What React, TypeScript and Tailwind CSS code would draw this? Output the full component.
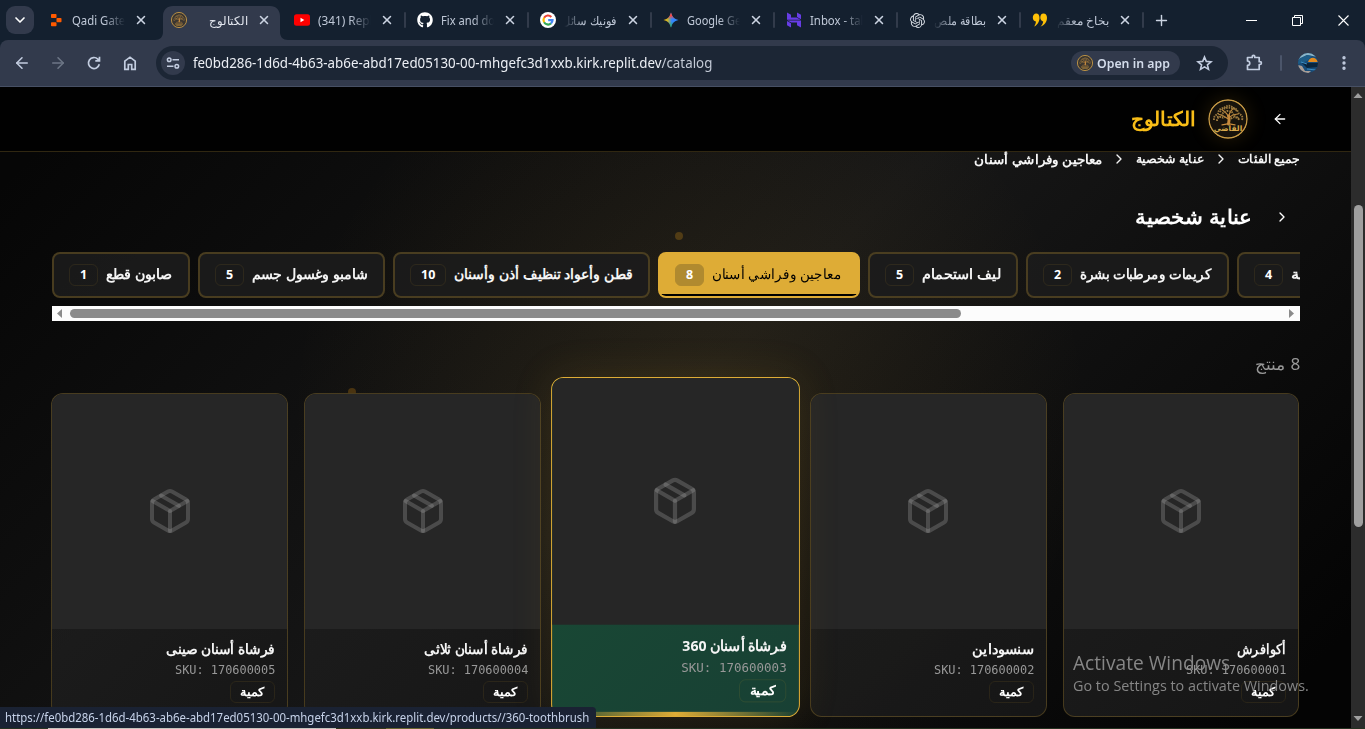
import { useLayoutEffect, useRef, useState, type ReactNode } from 'react';
import { ArrowLeft, ArrowRight, ChevronDown, ChevronRight, EllipsisVertical, Package, Plus, Star, X } from 'lucide-react';
import { FaGithub } from 'react-icons/fa';
import { SiOpenai } from 'react-icons/si';

const UI = "font-['Noto_Sans','Open_Sans',sans-serif]";

/** Single line of text condensed or widened to a fixed measure. */
function Fit({ w, rtl, className = '', children }: { w: number; rtl?: boolean; className?: string; children: ReactNode }) {
  const ref = useRef<HTMLSpanElement>(null);
  const [scale, setScale] = useState(1);
  useLayoutEffect(() => {
    if (ref.current && ref.current.offsetWidth) setScale(w / ref.current.offsetWidth);
  }, [w]);
  return (
    <span dir="ltr" className={`block shrink-0 ${className}`} style={{ width: w }}>
      <span ref={ref} dir={rtl ? 'rtl' : 'ltr'} className="inline-block origin-left whitespace-nowrap" style={{ transform: `scaleX(${scale})` }}>
        {children}
      </span>
    </span>
  );
}

function TreeLogo({ className, label }: { className: string; label?: boolean }) {
  return (
    <svg viewBox="0 0 40 40" className={className}>
      <circle cx="20" cy="20" r="19" fill={label ? '#17130c' : '#3a3530'} stroke="#c89b45" strokeWidth={label ? 1.4 : 2.2} />
      <g fill="none" stroke="#c58a3d" strokeLinecap="round">
        <path d="M20.500 25c1-3 .8-5 .2-8" strokeWidth="3" />
        <path d="M20 24.500c-1.500 1-4 1-6 1.300M21 24.500c1.500 1 4 1 6 1.300M20.500 20c-3-1-5-4-9-4.500M21 19c2-3 5-3.500 9-4M20.500 18c-1-3-3-5-6-7M21 17c0-3 2-5 4-7.500" strokeWidth="1.200" />
      </g>
      <g fill="none" stroke="#9c7a3f" strokeWidth="1.900" strokeDasharray="1.500 1">
        <path d="M6 21c-.5-4 2-5 4-6 0-4 3-6 6-6 3-3 7-3 9 0 3 0 5 3 6 6 3 1 4 3 3 6" />
        <path d="M9 22c0-4 3-4 5-5 0-4 3-4 5-5 4 0 6 1 7 5 2 0 5 2 5 5" />
        <path d="M12 13c3-5 12-6 17-1M9 18c5-1 5 2 8 0M23 20c3-4 6 0 8-1" />
      </g>
      {label ? (
        <text x="20" y="32" textAnchor="middle" fontSize="7.500" fontWeight="700" fill="#d9ab4c" fontFamily="Noto Sans, DejaVu Sans, sans-serif">القاضي</text>
      ) : (
        <path d="M10 30h20M13 33h14" stroke="#b98a3d" strokeWidth="2" />
      )}
    </svg>
  );
}

const icons: Record<string, ReactNode> = {
  replit: (
    <svg viewBox="0 0 16 16" className="size-4" fill="#ff5a00">
      <rect x="3" y="2" width="5.500" height="4" rx=".8" />
      <rect x="8.500" y="6" width="5" height="4.200" rx=".8" />
      <rect x="3" y="10.200" width="5.500" height="4" rx=".8" />
    </svg>
  ),
  tree: <TreeLogo className="size-4" />,
  youtube: (
    <svg viewBox="0 0 16 16" className="size-4">
      <rect y="2.300" width="16" height="11.400" rx="2.500" fill="#f00" />
      <path d="M6.500 5.800v4.400L10.300 8z" fill="#fff" />
    </svg>
  ),
  github: <FaGithub className="size-4 text-white" />,
  google: (
    <svg viewBox="0 0 16 16" className="size-4" fill="none" strokeWidth="2.200">
      <circle cx="8" cy="8" r="8" fill="#fff" />
      <path d="M11.300 4.900A4.500 4.500 0 0 0 4.100 5.800" stroke="#ea4335" />
      <path d="M4.100 5.800a4.500 4.500 0 0 0 0 4.400" stroke="#fbbc05" />
      <path d="M4.100 10.200a4.500 4.500 0 0 0 6.900 1.200" stroke="#34a853" />
      <path d="M11 11.400A4.500 4.500 0 0 0 12.500 8.200H8.200" stroke="#4285f4" />
    </svg>
  ),
  gemini: (
    <svg viewBox="0 0 16 16" className="size-4">
      <defs>
        <linearGradient id="gem" x1="0" y1=".5" x2="1" y2=".5">
          <stop offset="0" stopColor="#fbbc04" />
          <stop offset=".28" stopColor="#c9b52a" />
          <stop offset=".55" stopColor="#3186ff" />
          <stop offset="1" stopColor="#3186ff" />
        </linearGradient>
        <linearGradient id="gemTop" x1="0" y1="0" x2="0" y2="1">
          <stop offset="0" stopColor="#ff4641" />
          <stop offset=".2" stopColor="#ff4641" />
          <stop offset=".45" stopColor="#ff4641" stopOpacity="0" />
        </linearGradient>
        <linearGradient id="gemBottom" x1="0" y1="1" x2="0" y2="0">
          <stop offset="0" stopColor="#1fae5b" />
          <stop offset=".4" stopColor="#1fae5b" stopOpacity="0" />
        </linearGradient>
      </defs>
      <path d="M8 .5C9.300 5 11 6.700 15.500 8 11 9.300 9.300 11 8 15.500 6.700 11 5 9.300.5 8 5 6.700 6.700 5 8 .5z" fill="url(#gem)" />
      <path d="M8 .5C9.300 5 11 6.700 15.500 8 11 9.300 9.300 11 8 15.500 6.700 11 5 9.300.5 8 5 6.700 6.700 5 8 .5z" fill="url(#gemTop)" />
      <path d="M8 .5C9.300 5 11 6.700 15.500 8 11 9.300 9.300 11 8 15.500 6.700 11 5 9.300.5 8 5 6.700 6.700 5 8 .5z" fill="url(#gemBottom)" />
    </svg>
  ),
  hostinger: (
    <svg viewBox="0 0 16 16" className="size-4" fill="#673de6">
      <path d="M1 .5l4 2.200v2.900h5.500L14.700 7.800H1zM11 .5l4 2.200v4.600l-4-2.200zM1.200 8.400H15v7.100l-4-2.200v-2.700H5.300zM1 9l4 2.200v4.300l-4-2.200z" />
    </svg>
  ),
  openai: <SiOpenai className="size-[15px] text-[#d5dae2]" />,
  quote: (
    <svg viewBox="0 0 16 16" className="size-4" fill="#ffc107">
      <path d="M4.200 1.500c2 0 3.300 1.600 3.300 4.200C7.500 9.500 5.500 13 2.200 14.500c1-1.600 1.700-3.500 1.700-5.100C2 9.300.8 7.700.8 5.500S2.200 1.500 4.200 1.500z" />
      <path d="M11.500 1.500c2 0 3.500 1.600 3.500 4.200 0 4.300-2.500 7.600-6.500 8.800 1.500-1.500 2.600-3.400 2.700-5.100-1.700-.2-2.900-1.700-2.900-3.800 0-2.500 1.200-4.100 3.200-4.100z" />
    </svg>
  ),
};

type Tab = { icon: string; text: string; w: number; rtl?: boolean; active?: boolean; cut?: boolean; noSep?: boolean };
const tabs: Tab[] = [
  { icon: 'replit', text: 'Qadi Gate', w: 53, cut: true, noSep: true },
  { icon: 'tree', text: 'الكتالوج', w: 39, rtl: true, active: true, noSep: true },
  { icon: 'youtube', text: '(341) Repl', w: 55, cut: true },
  { icon: 'github', text: 'Fix and do', w: 54, cut: true },
  { icon: 'google', text: 'فونيك سائل', w: 55, rtl: true, cut: true },
  { icon: 'gemini', text: 'Google Ge', w: 54, cut: true },
  { icon: 'hostinger', text: 'Inbox - tal', w: 54, cut: true },
  { icon: 'openai', text: 'بطاقة ملص', w: 52, rtl: true, cut: true },
  { icon: 'quote', text: 'بخاخ معقم', w: 52, rtl: true, cut: true },
];

function TabItem({ t }: { t: Tab }) {
  const fade = !t.cut ? '' : t.rtl ? '[mask-image:linear-gradient(to_left,black_60%,transparent)]' : '[mask-image:linear-gradient(to_right,black_60%,transparent)]';
  return (
    <div className="relative h-full w-[123px] shrink-0">
      {t.active && (
        <svg viewBox="0 0 133 34" className="absolute -left-2 top-1.5 h-[34px] w-[133px]">
          <path d="M0 34c5 0 8-3 8-8V10C8 4 12 0 18 0h97c6 0 10 4 10 10v16c0 5 3 8 8 8z" fill="#323a4c" />
        </svg>
      )}
      <div className="relative flex h-full items-center pl-2">
        <span className="flex size-4 items-center justify-center">{icons[t.icon]}</span>
        <span className={`ml-2 flex w-[53px] overflow-hidden ${t.rtl ? 'justify-end' : ''} ${fade}`}>
          <Fit w={t.w} rtl={t.rtl} className={`pt-px text-[12px] leading-5 ${t.active ? 'text-[#e4e8f0]' : 'text-[#c0c9d8]'}`}>{t.text}</Fit>
        </span>
        <X className="ml-[9px] size-3.5 text-[#ccd4e2]" strokeWidth={2.600} />
        {!t.noSep && <span className="ml-[10px] h-4 w-0.5 rounded bg-[#323b4b]" />}
      </div>
    </div>
  );
}

const chips = [
  { n: '1', text: 'صابون قطع', w: 'w-[138px]', tw: 67 },
  { n: '5', text: 'شامبو وغسول جسم', w: 'w-[187px]', tw: 116 },
  { n: '10', text: 'قطن وأعواد تنظيف أذن وأسنان', w: 'w-[257px]', tw: 179 },
  { n: '8', text: 'معاجين وفراشي أسنان', w: 'w-[202px]', tw: 129, active: true },
  { n: '5', text: 'ليف استحمام', w: 'w-[150px]', tw: 79 },
  { n: '2', text: 'كريمات ومرطبات بشرة', w: 'w-[203px]', tw: 131 },
  { n: '4', text: 'عناية نسائية', w: 'w-[150px]', tw: 79 },
];

const products = [
  { label: 'فرشاة أسنان صينى', sku: '170600005', w: 109 },
  { label: 'فرشاة أسنان ثلاثى', sku: '170600004', w: 104 },
  { label: 'فرشاة أسنان 360', sku: '170600003', w: 99, hover: true },
  { label: 'سنسوداين', sku: '170600002', w: 62 },
  { label: 'أكوافرش', sku: '170600001', w: 49 },
];

function Card({ p }: { p: (typeof products)[number] }) {
  return (
    <article
      className={`relative flex h-[324px] flex-col overflow-hidden rounded-xl border ${
        p.hover
          ? 'z-10 -translate-y-2 scale-105 border-[#deac36] bg-[linear-gradient(135deg,#194c34,#184034)] shadow-[0_0_40px_0px_rgba(190,145,35,0.13)]'
          : 'border-[#d9a932]/25 bg-[linear-gradient(135deg,rgba(32,32,32,.94),rgba(23,23,23,.94))]'
      }`}
    >
      <div className="flex h-[235px] shrink-0 items-center justify-center bg-[#262626] pb-0.5">
        <Package className="size-12 text-[#a3a3a3]/30" strokeWidth={2} />
      </div>
      <div className="flex flex-col items-end px-3 pt-2.5">
        <Fit w={p.w} rtl className="h-5 text-[14px] font-bold leading-5 text-[#f5f5f5]">{p.label}</Fit>
        <Fit w={100} className="mt-[3px] h-4 font-['DejaVu_Sans_Mono','Liberation_Mono',monospace] text-[12.500px] leading-4 text-[#989898]">SKU: {p.sku}</Fit>
        <span className="mt-[3px] flex h-[22px] w-[45px] items-center justify-center rounded-md border border-[#d9a932]/10">
          <Fit w={25} rtl className="text-[12px] font-bold leading-4 text-white">كمية</Fit>
        </span>
      </div>
      {p.hover && <div className="absolute inset-x-0 bottom-0 h-1 bg-[linear-gradient(to_right,transparent,#deac36,transparent)]" />}
    </article>
  );
}

export default function App() {
  return (
    <div dir="ltr" className={`relative flex h-[729px] w-[1365px] flex-col overflow-hidden bg-black ${UI}`}>
      <div className="flex h-10 shrink-0 bg-[#14202f]">
        <div className="flex w-10 shrink-0 items-center pl-1.5">
          <button className="flex size-7 items-center justify-center rounded-[9px] bg-[#323a4c]">
            <ChevronDown className="size-4 text-white" strokeWidth={2.500} />
          </button>
        </div>
        {tabs.map((t) => <TabItem key={t.text} t={t} />)}
        <div className="flex w-7 items-center justify-center"><Plus className="size-[17px] text-[#ccd4e2]" strokeWidth={2} /></div>
        <div className="ml-auto flex items-center text-white">
          <svg viewBox="0 0 11 11" className="mr-[35px] h-[11px] w-[11px]"><path d="M0 5.500h11" stroke="currentColor" /></svg>
          <svg viewBox="0 0 11 11" className="mr-[35px] h-[11px] w-[11px]" fill="none" stroke="currentColor"><path d="M.5 2.500h8v8h-8zM2.500 2.500v-2h8v8h-2" /></svg>
          <svg viewBox="0 0 11 11" className="mr-4 h-[11px] w-[11px]"><path d="M.5.5l10 10M10.500.5l-10 10" stroke="currentColor" strokeWidth="1.100" /></svg>
        </div>
      </div>

      <div className="bg-[#14202f]">
        <div className="flex h-[47px] shrink-0 items-center rounded-t-[8px] border-b border-[#475064] bg-[#323a4c] text-[#c3cde0]">
          <ArrowLeft className="ml-[13px] size-[18px]" strokeWidth={2.100} />
          <ArrowRight className="ml-[18px] size-[18px] text-[#6d7686]" strokeWidth={2.100} />
          <svg viewBox="0 0 18 18" className="ml-[18px] size-[18px]" fill="none" stroke="currentColor" strokeWidth="1.700"><path d="M14.300 10.300a5.500 5.500 0 1 1-1.500-5.200l1.700 1.700M14.500 2.700v4.200h-4.200" /></svg>
          <svg viewBox="0 0 18 18" className="ml-[18px] size-[18px]" fill="none" stroke="currentColor" strokeWidth="1.700"><path d="M3.800 15.300V7.200L9 3.200l5.200 4v8.100h-3.500v-4.800H7.300v4.800z" /></svg>
          <div className="ml-[17px] flex h-[34px] w-[1072px] items-center rounded-full bg-[#1c2635] pl-[5px]">
            <span className="flex size-6 items-center justify-center rounded-full bg-[#323a4c]">
              <svg viewBox="0 0 14 14" className="size-3.5" fill="none" stroke="currentColor" strokeWidth="1.500"><circle cx="3.200" cy="3.700" r="1.800" /><path d="M6.500 3.700h6.500M1 10.300h6.500" /><circle cx="10.800" cy="10.300" r="1.800" /></svg>
            </span>
            <Fit w={519} className="ml-2 text-[14px] leading-6 text-[#eceff5]">
              fe0bd286-1d6d-4b63-ab6e-abd17ed05130-00-mhgefc3d1xxb.kirk.replit.dev<span className="text-[#c3cad6]">/catalog</span>
            </Fit>
            <span className="ml-auto flex h-6 w-[109px] items-center gap-1 rounded-full bg-[#323a4c] pl-1.5">
              <TreeLogo className="size-4" />
              <Fit w={73} className="text-[13px] font-semibold leading-5 text-[#d3dceb]">Open in app</Fit>
            </span>
            <svg viewBox="0 0 17 17" className="ml-[16px] mr-[15px] size-[17px]" fill="none" stroke="currentColor" strokeWidth="1.600"><path d="M8.500 2l1.800 4.400 4.700.4-3.600 3 1.100 4.600-4-2.500-4 2.500 1.100-4.600-3.600-3 4.700-.4z" /></svg>
          </div>
          <svg viewBox="0 0 18 18" className="ml-[17px] size-[18px]" fill="none" stroke="currentColor" strokeWidth="1.700" strokeLinejoin="round"><path d="M2.500 3.500h4.700V2.700a1.300 1.300 0 0 1 2.600 0v.8h4.400v4.200h.8a1.400 1.400 0 0 1 0 2.800h-.8v5H2.500v-4.200c3 0 3-4.300 0-4.300z" /></svg>
          <span className="ml-[17px] h-4 w-0.5 rounded bg-[#4b556a]" />
          <svg viewBox="0 0 20 20" className="ml-4 size-5">
            <defs><clipPath id="av"><circle cx="10" cy="10" r="10" /></clipPath></defs>
            <g clipPath="url(#av)">
              <path fill="#174c79" d="M0 0h20v20H0z" /><path fill="#8ab4c8" d="M0 0h20v4L9 2 0 7z" /><path fill="#1d5c87" d="M0 6l9-4 5 1-5 5-9 3z" /><path fill="#e38b20" d="M10 9c2-6 8-5 10 0z" />
              <path fill="#0b253c" d="M4 10h16v4L9 15z" /><path fill="#a99c94" d="M0 12l4 1 3 5 6 0-2 2H0z" /><path stroke="#3b8bc0" strokeWidth="1" d="M3 9l6 2M9 16l9 1" />
            </g>
          </svg>
          <EllipsisVertical className="ml-[17px] size-[18px]" strokeWidth={2.500} />
        </div>
      </div>

      <div className="flex min-h-0 flex-1">
        <main className="relative flex w-[1351px] flex-col bg-[radial-gradient(circle_at_690px_330px,rgba(200,150,40,0.10),transparent_400px),linear-gradient(135deg,#060606_5%,#171717_50%,#040404_95%)]">
          <span className="absolute left-[675px] top-[145px] size-2 rounded-full bg-[#513c15]" />
          <span className="absolute left-[348px] top-[301px] size-2 rounded-full bg-[#4a3410]" />
          <header className="flex h-[65px] shrink-0 items-center justify-end border-b border-[#302711] bg-[#010101] pr-[63px]">
            <Fit w={65} rtl className="text-[20px] font-semibold leading-8 text-[#f8bd17]">الكتالوج</Fit>
            <TreeLogo label className="ml-3 size-10 rounded-full shadow-[0_0_20px_rgba(190,140,35,0.2)]" />
            <ArrowLeft className="ml-6 size-4 text-white" strokeWidth={1.900} />
          </header>
          <div className="-mt-px flex h-4 shrink-0 items-center justify-end pr-[52px] text-[#f5f5f5]">
            <Fit w={129} rtl className="text-[13px] font-bold leading-4">معاجين وفراشي أسنان</Fit>
            <ChevronRight className="ml-2 mr-[9px] size-4" strokeWidth={2} />
            <Fit w={68} rtl className="text-[12px] font-bold leading-4">عناية شخصية</Fit>
            <ChevronRight className="mx-[9px] size-4" strokeWidth={2} />
            <Fit w={61} rtl className="text-[12px] font-bold leading-4">جميع الفئات</Fit>
          </div>
          <div className="mt-[34px] flex h-8 shrink-0 items-center justify-end pr-[61px] text-white">
            <Fit w={117} rtl className="text-[20px] font-bold leading-8">عناية شخصية</Fit>
            <ChevronRight className="ml-[22px] size-4" strokeWidth={2} />
          </div>
          <div className="ml-[52px] mt-[19px] w-[1248px] shrink-0">
            <div className="flex h-[46px] gap-2 overflow-hidden">
              {chips.map((c) => (
                <div key={c.text} className={`relative flex h-[46px] shrink-0 items-center overflow-hidden rounded-lg border-2 pb-0.5 pl-4 ${c.w} ${c.active ? 'border-[#deac36] bg-[#deac36] text-black' : 'border-[#d9a932]/25 bg-[#1c1c1c]/90 text-[#f5f5f5]'}`}>
                  <span className={`-ml-px mt-0.5 flex h-[22px] min-w-[29px] items-center justify-center rounded-md border px-2.5 pb-px text-[12.500px] font-bold leading-4 text-white ${c.active ? 'border-[#b08a2f] bg-[#b08a2f]' : 'border-[#d9a932]/10'}`}>{c.n}</span>
                  <Fit w={c.tw} rtl className={`ml-2 text-[14px] leading-5 ${c.active ? 'font-medium' : 'font-bold'}`}>{c.text}</Fit>
                  {c.active && <span className="absolute -inset-x-0.5 bottom-0 h-0.5 bg-black" />}
                </div>
              ))}
            </div>
            <div className="mt-2 flex h-[15px] items-center bg-[#fcfcfc]">
              <svg viewBox="0 0 18 15" className="h-[15px] w-[18px]"><path d="M10 3v9L5 7.500z" fill="#8b8b8b" /></svg>
              <div className="h-[9px] w-[891px] rounded-full bg-[#8b8b8b]" />
              <svg viewBox="0 0 18 15" className="ml-auto h-[15px] w-[18px]"><path d="M7 3v9l5-4.500z" fill="#8b8b8b" /></svg>
            </div>
          </div>
          <div className="mt-[31px] flex h-6 shrink-0 justify-end pr-[51px]">
            <Fit w={45} rtl className="text-[16px] leading-6 text-[#999]">8 منتج</Fit>
          </div>
          <div className="ml-[51.400px] mt-[17px] grid w-[1248px] shrink-0 grid-cols-5 gap-4">
            {products.map((p) => <Card key={p.sku} p={p} />)}
          </div>
        </main>
        <div className="flex w-3.5 flex-col items-center bg-[#2c2c2c]">
          <svg viewBox="0 0 14 14" className="h-3.5 w-3.5"><path d="M2.500 11L7 6l4.500 5z" fill="#9f9f9f" /></svg>
          <div className="mt-[104px] h-[322px] w-[9px] rounded-full bg-[#9f9f9f]" />
          <svg viewBox="0 0 14 14" className="mb-1 mt-auto h-3.5 w-3.5"><path d="M2.500 5L7 10l4.500-5z" fill="#9f9f9f" /></svg>
        </div>
      </div>

      <div className="absolute left-[1073px] top-[650px] z-20 flex flex-col font-['Open_Sans','Noto_Sans',sans-serif] text-[#929292]/90">
        <Fit w={157} className="h-[25px] text-[20px] leading-[25px]">Activate Windows</Fit>
        <Fit w={236} className="h-5 text-[15px] leading-5">Go to Settings to activate Windows.</Fit>
      </div>
      <div className="absolute bottom-0 left-0 z-20 flex h-px w-full bg-[#253221]">
        <span className="ml-12 w-72 bg-[#c4c4bd]" />
        <span className="w-[50px] bg-[#303417]" />
        <span className="w-12 bg-[#67652d]" />
      </div>
      <div className="absolute bottom-px left-0 z-20 h-[21px] w-[596px] rounded-tr bg-[#1a2233] pl-[5px]">
        <Fit w={584} className="text-[12px] leading-[21px] text-[#c6d2e9]">https://fe0bd286-1d6d-4b63-ab6e-abd17ed05130-00-mhgefc3d1xxb.kirk.replit.dev/products//360-toothbrush</Fit>
      </div>
    </div>
  );
}
